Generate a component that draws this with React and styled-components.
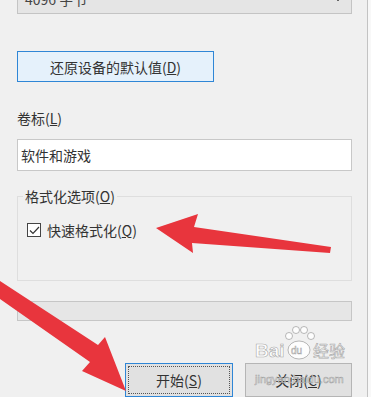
import React from "react";
import styled, { createGlobalStyle } from "styled-components";

const Global = createGlobalStyle`
  html, body { margin: 0; padding: 0; background: #f8f8f8; }
  body { font-family: "Noto Sans CJK SC", "Noto Sans", sans-serif; }
  * { box-sizing: border-box; }
`;

const Panel = styled.div`
  position: relative;
  width: 368px;
  height: 397px;
  overflow: hidden;
  background: #f0f0f0;
  border-right: 1px solid #c3c3c3;
  padding: 0 15px 0 17px;
  display: flex;
  flex-direction: column;
  font-size: 14px;
  color: #333;
`;

const Select = styled.div`
  margin-top: -16px;
  height: 30px;
  border: 1px solid #c4c4c4;
  background: #e5e5e5;
  display: flex;
  align-items: center;
  justify-content: space-between;
  padding: 0 8px 0 7px;
  line-height: 20px;
  color: #444;
`;

const Button = styled.button`
  font: inherit;
  color: #333;
  height: ${p => p.$h || 32}px;
  width: ${p => p.$w}px;
  border: 1px solid ${p => (p.$focus ? "#2f86d6" : "#b5b5b5")};
  background: ${p => p.$bg || "#e1e1e1"};
  padding: 0;
  display: flex;
  align-items: center;
  justify-content: center;
  position: relative;
  outline: ${p => (p.$dotted ? "1px dotted #555" : "none")};
  outline-offset: -4px;
  line-height: 20px;
`;

const RestoreButton = styled(Button)`
  margin-top: 37px;
`;

const Label = styled.div`
  margin-top: 26px;
  line-height: 20px;
`;

const Input = styled.div`
  margin-top: 11px;
  height: 32px;
  border: 1px solid #c8c8c8;
  background: #fff;
  padding: 0 3px;
  display: flex;
  align-items: center;
  line-height: 20px;
`;

const Group = styled.fieldset`
  margin: 15px 0 0 0;
  padding: 0 0 0 5px;
  border: 1px solid #dedede;
  height: 96px;
  min-width: 0;
`;

const Legend = styled.legend`
  padding: 0 2px;
  line-height: 20px;
  font-size: 14px;
`;

const CheckRow = styled.label`
  margin: 14px 0 0 4px;
  display: flex;
  align-items: center;
  gap: 6px;
  line-height: 20px;
`;

const Box = styled.span`
  width: 14px;
  height: 14px;
  border: 1px solid #444;
  background: #fff;
  display: flex;
  align-items: center;
  justify-content: center;
`;

const Progress = styled.div`
  margin-top: 20px;
  height: 20px;
  border: 1px solid #c6c6c6;
  background: #e6e6e6;
`;

const ButtonRow = styled.div`
  margin-top: 42px;
  display: flex;
  justify-content: flex-end;
  gap: 12px;
`;

const Overlay = styled.svg`
  position: absolute;
  left: 0;
  top: 0;
  pointer-events: none;
`;

const Watermark = styled.div`
  position: absolute;
  left: ${p => p.$x}px;
  top: ${p => p.$y}px;
  font-family: ${p => (p.$latin ? '"Liberation Sans", Arial, sans-serif' : '"Noto Sans CJK SC", sans-serif')};
  font-size: ${p => p.$size}px;
  font-weight: ${p => p.$weight || 400};
  color: rgba(255, 255, 255, 0.85);
  -webkit-text-stroke: 0.6px rgba(140, 140, 140, 0.75);
  pointer-events: none;
  white-space: nowrap;
  line-height: 1;
`;

export default function App() {
  return (
    <>
      <Global />
      <Panel>
        <Select>
          <span>4096 字节</span>
          <svg width="10" height="6" viewBox="0 0 10 6">
            <path d="M1 1 L5 5 L9 1" fill="none" stroke="#666" strokeWidth="1" />
          </svg>
        </Select>
        <RestoreButton $w={197} $h={32} $focus $bg="#e5f1fb">
          还原设备的默认值(<u>D</u>)
        </RestoreButton>
        <Label>卷标(<u>L</u>)</Label>
        <Input>软件和游戏</Input>
        <Group>
          <Legend>格式化选项(<u>O</u>)</Legend>
          <CheckRow>
            <Box>
              <svg width="11" height="9" viewBox="0 0 11 9">
                <path d="M1 4.5 L4 7.5 L10 1" fill="none" stroke="#333" strokeWidth="1.2" />
              </svg>
            </Box>
            <span>快速格式化(<u>Q</u>)</span>
          </CheckRow>
        </Group>
        <Progress />
        <ButtonRow>
          <Button $w={108} $h={34} $focus $dotted>
            开始(<u>S</u>)
          </Button>
          <Button $w={107} $h={34}>
            关闭(<u>C</u>)
          </Button>
        </ButtonRow>

        <Watermark $x={255} $y={341} $size={19} $weight={700} $latin>Bai</Watermark>
        <Overlay width="371" height="397" viewBox="0 0 371 397">
          <g fill="rgba(255,255,255,0.85)" stroke="rgba(140,140,140,0.75)" strokeWidth="0.8">
            <ellipse cx="299" cy="350" rx="11" ry="9" />
            <circle cx="289" cy="336" r="3.5" />
            <circle cx="296" cy="330" r="3.5" />
            <circle cx="304" cy="330" r="3.5" />
            <circle cx="311" cy="336" r="3.5" />
          </g>
        </Overlay>
        <Watermark $x={291} $y={346} $size={10} $latin>du</Watermark>
        <Watermark $x={313} $y={342} $size={16}>经验</Watermark>
        <Watermark $x={255} $y={374} $size={11} $latin>jingyan.baidu.com</Watermark>

        <Overlay width="371" height="397" viewBox="0 0 371 397">
          <polygon points="156,228 198,214 194,227 331,247 330,253 192,243 193,253" fill="#e8353d" />
          <polygon points="0,281 98,345 105,337 126,391 82,371 90,362 0,299" fill="#e8353d" />
        </Overlay>
      </Panel>
    </>
  );
}
